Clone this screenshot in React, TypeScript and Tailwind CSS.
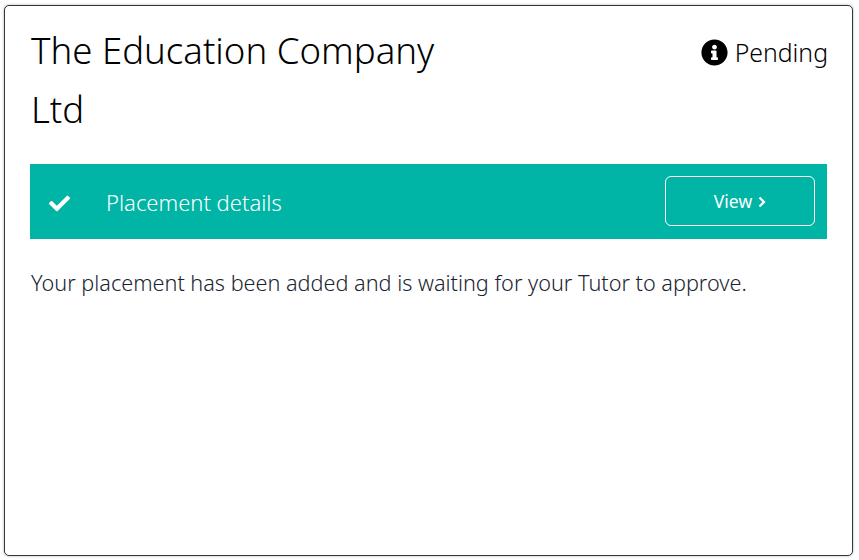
function InfoIcon() {
  return (
    <svg viewBox="0 0 512 512" className="w-[27px] h-[27px] shrink-0" fill="#000">
      <path d="M256 8C119 8 8 119 8 256s111 248 248 248 248-111 248-248S393 8 256 8zm0 100c26 0 46 20 46 46s-20 46-46 46-46-20-46-46 20-46 46-46zm66 276c0 8-6 14-14 14h-104c-8 0-14-6-14-14v-26c0-8 6-14 14-14h14v-68h-14c-8 0-14-6-14-14v-28c0-8 6-14 14-14h76c8 0 14 6 14 14v110h14c8 0 14 6 14 14v26z" />
    </svg>
  );
}

function CheckIcon() {
  return (
    <svg viewBox="0 0 512 512" className="w-[21px] h-[21px] shrink-0 mt-[3px]" fill="#fff">
      <path d="M173.900 439.400l-166.400-166.400c-10-10-10-26.200 0-36.200l36.200-36.200c10-10 26.200-10 36.200 0L192 312.700 432.100 72.600c10-10 26.200-10 36.200 0l36.200 36.200c10 10 10 26.200 0 36.200l-294.400 294.400c-10 10-26.200 10-36.200 0z" />
    </svg>
  );
}

function ChevronIcon() {
  return (
    <svg viewBox="0 0 8 12" className="w-[8px] h-[12px] shrink-0 mt-[1px]" fill="none" stroke="#fff" strokeWidth="2.2">
      <path d="M1.500 1.500 L6 6 L1.500 10.500" />
    </svg>
  );
}

export default function App() {
  return (
    <div className="w-[859px] h-[560px] bg-white p-[4px] pt-[5px] font-['Noto_Sans','Liberation_Sans',sans-serif]">
      <div className="h-[551px] w-[849px] rounded-[5px] border border-[#2d3540] bg-white shadow-[0_0_3px_rgba(0,0,0,0.3)] pt-[15px] pl-[26px] pr-[25px]">
        <div className="flex items-start justify-between">
          <h1 className="w-[440px] text-[36.6px] leading-[59px] font-light text-black">The Education Company Ltd</h1>
          <div className="-mr-[1px] flex items-center gap-[7px] pt-[11px] text-[24.8px] leading-[40px] font-light text-black">
            <InfoIcon />
            <span>Pending</span>
          </div>
        </div>
        <div className="-ml-[1px] mt-[25px] flex h-[75px] items-center bg-[#00b5a5] pl-[19px] pr-[12px] text-white">
          <CheckIcon />
          <span className="ml-[36px] flex-1 pt-[1px] text-[22px] font-light">Placement details</span>
          <button className="mb-[1px] flex h-[50px] w-[150px] items-center justify-center gap-[6px] rounded-[6px] border border-white text-[17.5px] font-normal">
            View
            <ChevronIcon />
          </button>
        </div>
        <p className="mt-[29px] text-[21.65px] leading-[30px] font-light text-[#1a2430]">
          Your placement has been added and is waiting for your Tutor to approve.
        </p>
      </div>
    </div>
  );
}
